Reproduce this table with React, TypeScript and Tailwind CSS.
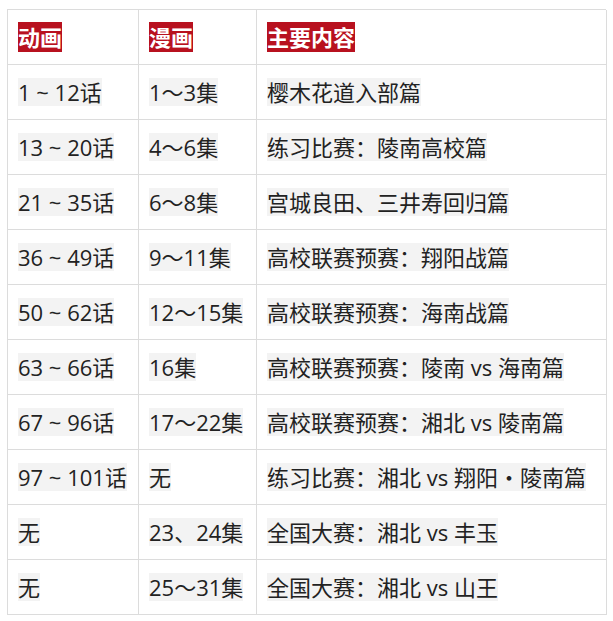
import React from 'react';

const rows = [
  ["1 ~ 12话", "1〜3集", "樱木花道入部篇"],
  ["13 ~ 20话", "4〜6集", "练习比赛：陵南高校篇"],
  ["21 ~ 35话", "6〜8集", "宫城良田、三井寿回归篇"],
  ["36 ~ 49话", "9〜11集", "高校联赛预赛：翔阳战篇"],
  ["50 ~ 62话", "12〜15集", "高校联赛预赛：海南战篇"],
  ["63 ~ 66话", "16集", "高校联赛预赛：陵南 vs 海南篇"],
  ["67 ~ 96话", "17〜22集", "高校联赛预赛：湘北 vs 陵南篇"],
  ["97 ~ 101话", "无", "练习比赛：湘北 vs 翔阳・陵南篇"],
  ["无", "23、24集", "全国大赛：湘北 vs 丰玉"],
  ["无", "25〜31集", "全国大赛：湘北 vs 山王"],
];

const headers = ["动画", "漫画", "主要内容"];

const App = () => {
  return (
    <div className="min-h-screen bg-white pt-[9px] pl-[7px] font-['Open_Sans','Noto_Sans_CJK_SC',sans-serif]">
      <div className="grid w-[599px] grid-cols-[131px_118px_350px] border-l border-t border-[#dcdcdc]">
        {headers.map((h) => (
          <div key={h} className="flex h-[55px] items-center border-b border-r border-[#dcdcdc] px-[10px]">
            <span className="bg-[#b8111f] text-[22px] font-bold leading-[30px] text-white">{h}</span>
          </div>
        ))}
        {rows.map((row, i) =>
          row.map((cell, j) => (
            <div key={`${i}-${j}`} className="flex h-[55px] items-center border-b border-r border-[#dcdcdc] px-[10px]">
              <span className="whitespace-nowrap bg-[#f3f3f3] text-[22px] leading-[28px] text-[#222222]">{cell}</span>
            </div>
          ))
        )}
      </div>
    </div>
  );
};

export default App;
